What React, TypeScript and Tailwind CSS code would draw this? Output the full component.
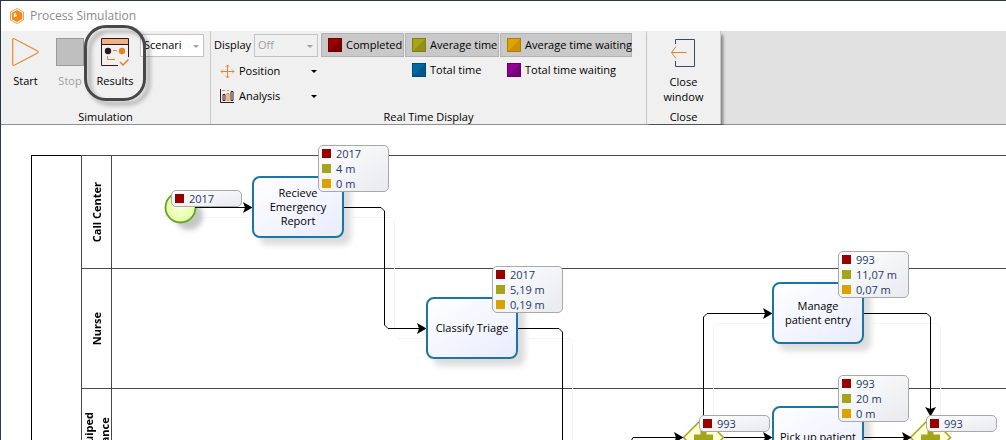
import type { ReactNode } from "react";
import { clsx } from "clsx";

type Metric = "completed" | "average" | "waiting";

interface Stat {
  metric: Metric;
  value: string;
}

interface Badge {
  left: number;
  top: number;
  stats: Stat[];
}

interface Task {
  left: number;
  top: number;
  name: string[];
}

const metricColors = {
  completed: "bg-[#990000]",
  average: "bg-[#a5a51b]",
  waiting: "bg-[#dba200]",
};

const done = (value: string): Stat => ({ metric: "completed", value });
const avg = (value: string): Stat => ({ metric: "average", value });
const wait = (value: string): Stat => ({ metric: "waiting", value });

const lanes = [
  { name: ["Call Center"], height: "h-[113px]" },
  { name: ["Nurse"], height: "h-[120px]" },
  { name: ["Fully Equiped", "Ambulance"], height: "h-[120px]" },
];

const tasks: Task[] = [
  { left: 251, top: 51, name: ["Recieve", "Emergency", "Report"] },
  { left: 425, top: 172, name: ["Classify Triage"] },
  { left: 771, top: 157, name: ["Manage", "patient entry"] },
  { left: 771, top: 281, name: ["Pick up patient"] },
];

const badges: Badge[] = [
  { left: 170, top: 65, stats: [done("2017")] },
  { left: 317, top: 20, stats: [done("2017"), avg("4 m"), wait("0 m")] },
  { left: 491, top: 141, stats: [done("2017"), avg("5,19 m"), wait("0,19 m")] },
  { left: 837, top: 126, stats: [done("993"), avg("11,07 m"), wait("0,07 m")] },
  { left: 837, top: 250, stats: [done("993"), avg("20 m"), wait("0 m")] },
  { left: 698, top: 290, stats: [done("993")] },
  { left: 925, top: 290, stats: [done("993")] },
];

const flows = [
  "M194 82.5H251",
  "M342 82.5H380L383.5 86V200L387 203.5H425",
  "M516 203.5H558L561.5 207V340",
  "M629 318L632 312.5H682",
  "M702.5 292V192L706 188.5H771",
  "M862 188.5H926L929.5 192V291",
  "M723 312.5H771",
  "M862 312.5H910",
];

function ToolButton({
  icon,
  label,
  disabled,
  className,
}: {
  icon: ReactNode;
  label: string;
  disabled?: boolean;
  className?: string;
}) {
  return (
    <button
      disabled={disabled}
      className={clsx(
        "flex flex-col items-center gap-[7px] pt-[7px] leading-[15px]",
        disabled && "text-[#a0a0a0]",
        className
      )}
    >
      {icon}
      <span>{label}</span>
    </button>
  );
}

function RibbonSelect({
  id,
  value,
  disabled,
}: {
  id: string;
  value: string;
  disabled?: boolean;
}) {
  return (
    <div className="relative">
      <select
        id={id}
        aria-label={value}
        disabled={disabled}
        className={clsx(
          "block h-[23px] w-16 appearance-none border border-[#c3c3c3] pl-[3px] opacity-100",
          disabled ? "bg-[#f0f0f0] text-[#a0a0a0]" : "bg-white text-black"
        )}
      >
        <option>{value}</option>
      </select>
      <svg
        className="pointer-events-none absolute top-[11px] right-[5px]"
        width="6"
        height="3"
        fill="#a0a0a0"
      >
        <path d="M0 0H6L3 3Z" />
      </svg>
    </div>
  );
}

function Swatch({ light, dark, edge }: { light: string; dark: string; edge: string }) {
  return (
    <svg width="14" height="14" className="shrink-0">
      <rect width="14" height="14" fill={light} />
      <path d="M14 0V14H0Z" fill={dark} />
      <rect x=".5" y=".5" width="13" height="13" fill="none" stroke={edge} />
    </svg>
  );
}

function Toggle({
  label,
  pressed,
  children,
}: {
  label: string;
  pressed?: boolean;
  children: ReactNode;
}) {
  return (
    <button
      aria-pressed={!!pressed}
      className={clsx(
        "flex h-6 items-center gap-1 border pl-1.5 whitespace-nowrap",
        pressed ? "border-[#b2b2b2] bg-[#c9c9c9]" : "border-transparent"
      )}
    >
      {children}
      {label}
    </button>
  );
}

function MenuButton({ icon, label }: { icon: ReactNode; label: string }) {
  return (
    <button className="flex h-[25px] w-[103px] items-center gap-1 pl-1.5">
      {icon}
      <span className="grow text-left">{label}</span>
      <svg width="6" height="3">
        <path d="M0 0H6L3 3Z" />
      </svg>
    </button>
  );
}

function Group({
  title,
  className,
  children,
}: {
  title: string;
  className?: string;
  children: ReactNode;
}) {
  return (
    <section
      className={clsx(
        "flex shrink-0 flex-col border-r border-[#c8c8c8] bg-[#f0f0f0]",
        className
      )}
    >
      <div className="flex h-[78px] items-start">{children}</div>
      <h2 className="text-center leading-[15px]">{title}</h2>
    </section>
  );
}

function Ribbon() {
  return (
    <div className="flex border-b border-[#8f8f8f] bg-[#e1e1e1] text-[11px]">
      <Group title="Simulation" className="w-[210px]">
        <ToolButton
          className="w-[49px]"
          label="Start"
          icon={
            <svg width="28" height="28" fill="none" stroke="#e88a33" strokeWidth="1.2">
              <path d="M.7 2Q.7 0 2.7 1L25.500 13Q27 14 25.500 15L2.700 27Q.7 28 .7 26Z" />
            </svg>
          }
        />
        <ToolButton
          className="w-10"
          label="Stop"
          disabled
          icon={<span className="size-7 border border-[#9a9a9a] bg-[#bfbfbf]" />}
        />
        <div className="relative">
          <ToolButton
            className="w-[50px]"
            label="Results"
            icon={
              <svg width="28" height="28" fill="none">
                <path d="M.5 .5H27.500V6.500H.5Z" fill="#f0b184" />
                <path d="M17 27.500H.5V.5H27.500V19M.5 6.500H27.500" stroke="#2f1620" />
                <circle cx="7" cy="13" r="3.200" fill="#2f1620" />
                <circle cx="21" cy="13" r="3.200" fill="#e8822a" />
                <path d="M12 12.500H16M6.500 18V21.500H14" stroke="#e8822a" />
                <path d="M19 24L22 27L27.500 21.500" stroke="#e8822a" strokeWidth="1.500" />
              </svg>
            }
          />
          <div className="pointer-events-none absolute -top-[6px] -left-[6px] z-10 h-[76px] w-[62px] rounded-[22px] border-[3px] border-[#484848] drop-shadow-[4px_4px_2px_rgba(0,0,0,0.35)]" />
        </div>
        <div className="pt-[3px]">
          <RibbonSelect id="scenario" value="Scenari" />
        </div>
      </Group>

      <Group title="Real Time Display" className="w-[436px]">
        <div className="w-[110px] pt-[3px] pl-[3px]">
          <div className="flex items-center justify-between pr-[3px] pb-0.5">
            <label htmlFor="display">Display</label>
            <RibbonSelect id="display" value="Off" disabled />
          </div>
          <MenuButton
            label="Position"
            icon={
              <svg width="15" height="15" fill="none" stroke="#e8822a">
                <path d="M7.500 1V14M1 7.500H14" />
                <path
                  d="M5.500 3L7.500 1L9.500 3M5.500 12L7.500 14L9.500 12M3 5.500L1 7.500L3 9.500M12 5.500L14 7.500L12 9.500"
                  strokeWidth=".8"
                />
              </svg>
            }
          />
          <MenuButton
            label="Analysis"
            icon={
              <svg width="15" height="15" fill="none" stroke="#2f1620">
                <path d="M.5 0V13.500H14M3 5.500H5V11.500H3ZM11 2.500H13V11.500H11Z" />
                <path d="M7 4.500H9V11.500H7Z" stroke="#e8822a" />
                <path d="M2 1.500H5M7 1.500H9" stroke="#a0949a" />
              </svg>
            }
          />
        </div>
        <div className="grid grid-cols-[83px_94px_132px] gap-x-px gap-y-px pt-0.5">
          <Toggle label="Completed" pressed>
            <Swatch light="#9c0000" dark="#7d0000" edge="#6b0000" />
          </Toggle>
          <Toggle label="Average time" pressed>
            <Swatch light="#a5a51b" dark="#919116" edge="#80800f" />
          </Toggle>
          <Toggle label="Average time waiting" pressed>
            <Swatch light="#dda500" dark="#cf9000" edge="#b07c00" />
          </Toggle>
          <span />
          <Toggle label="Total time">
            <Swatch light="#006ba0" dark="#005a8c" edge="#004a78" />
          </Toggle>
          <Toggle label="Total time waiting">
            <Swatch light="#910091" dark="#780078" edge="#650065" />
          </Toggle>
        </div>
      </Group>

      <Group title="Close" className="w-[74px] shadow-[2px_4px_3px_rgba(0,0,0,0.45)]">
        <button className="flex grow flex-col items-center gap-[7px] pt-2 leading-[15px]">
          <svg width="26" height="28" fill="none">
            <path d="M4.500 5V.5H23.500V27.500H4.500V22" stroke="#3a4a5e" />
            <path d="M15.500 13.500H.5M5 7.500L.5 13.500L5 19.500" stroke="#e8822a" />
          </svg>
          <span>
            Close
            <br />
            window
          </span>
        </button>
      </Group>
    </div>
  );
}

function StatBadge({ left, top, stats }: Badge) {
  return (
    <ul
      style={{ left, top }}
      className="absolute w-[71px] rounded-[5px] border border-[#a8a8a8] bg-gradient-to-br from-white to-[#e8eaee] pl-[3px] text-[#22396a]"
    >
      {stats.map((s) => (
        <li key={s.metric} className="flex h-[15px] items-center gap-[5px] leading-[15px]">
          <span className={clsx("size-[9px]", metricColors[s.metric])} />
          {s.value}
        </li>
      ))}
    </ul>
  );
}

function TaskBox({ left, top, name }: Task) {
  return (
    <div
      style={{ left, top }}
      className="absolute flex h-[62px] w-[92px] flex-col items-center justify-center rounded-lg border-2 border-[#1a76a6] bg-gradient-to-br from-white to-[#e9ecff] pb-px leading-[14px] shadow-[7px_7px_6px_rgba(0,0,0,0.14)]"
    >
      {name.map((line) => (
        <span key={line}>{line}</span>
      ))}
    </div>
  );
}

function Gateway({ x, y }: { x: number; y: number }) {
  return (
    <g transform={`translate(${x} ${y})`}>
      <path d="M0 -20L20 0L0 20L-20 0Z" fill="#ffffd8" stroke="#a5a51b" strokeWidth="1.500" />
      <path d="M-9.500 0H9.500M0 -9.500V9.500" stroke="#a5a51b" strokeWidth="6" />
    </g>
  );
}

function Diagram() {
  return (
    <main className="relative grow overflow-hidden bg-white pt-[30px] pl-[30px] text-[11px]">
      <div className="flex border-l border-black">
        <div className="w-[49px] shrink-0 border-t border-black" />
        <div className="grow border-t border-l border-[#484848]">
          {lanes.map((lane) => (
            <div
              key={lane.name[0]}
              className={clsx("flex border-b border-[#484848]", lane.height)}
            >
              <h3 className="flex w-[30px] shrink-0 items-center justify-center border-r border-[#484848]">
                <span className="rotate-180 text-center leading-4 font-bold whitespace-nowrap [writing-mode:vertical-rl]">
                  {lane.name.map((line) => (
                    <span key={line} className="block">
                      {line}
                    </span>
                  ))}
                </span>
              </h3>
            </div>
          ))}
        </div>
      </div>

      <svg className="absolute inset-0 size-full" fill="none">
        <defs>
          <marker
            id="arrow"
            markerUnits="userSpaceOnUse"
            markerWidth="10"
            markerHeight="12"
            refX="9"
            refY="6"
            orient="auto"
          >
            <path d="M0 0.500L9.500 6L0 11.500L2 6Z" fill="#000" />
          </marker>
          <radialGradient id="start">
            <stop offset="0" stopColor="#f6ffd8" />
            <stop offset="1" stopColor="#e6ffa8" />
          </radialGradient>
          <filter id="soft" x="-50%" y="-50%" width="200%" height="200%">
            <feGaussianBlur stdDeviation="2.500" />
          </filter>
        </defs>
        {flows.map((d) => (
          <path key={d} d={d} stroke="#f5f5f5" transform="translate(10 10)" />
        ))}
        <circle cx="188" cy="91" r="14" fill="#000" fillOpacity=".22" filter="url(#soft)" />
        <circle cx="179.500" cy="82.500" r="15" fill="url(#start)" stroke="#62a81c" strokeWidth="1.800" />
        <Gateway x={702.5} y={312.5} />
        <Gateway x={929.5} y={312.5} />
        {flows.map((d) => (
          <path key={d} d={d} stroke="#000" markerEnd="url(#arrow)" />
        ))}
      </svg>

      {tasks.map((t) => (
        <TaskBox key={t.name[0]} {...t} />
      ))}
      {badges.map((b) => (
        <StatBadge key={`${b.left}-${b.top}`} {...b} />
      ))}
    </main>
  );
}

export default function App() {
  return (
    <div className="flex h-screen flex-col overflow-hidden border-t border-l border-[#2b364a] bg-white font-['Open_Sans','Noto_Sans',sans-serif] text-black">
      <header className="flex h-[30px] shrink-0 items-center gap-[5px] pl-2">
        <svg width="16" height="16" viewBox="0 0 16 16">
          <path d="M8 .5L14.500 4V12L8 15.500L1.500 12V4Z" fill="#fff" stroke="#f0a050" />
          <path d="M8 2L13.200 4.800V11.200L8 14L2.800 11.200V4.800Z" fill="#f08a1c" />
          <path d="M8 2V8L4.800 9.500V5.500L6.500 4.500V7L8 6.500Z" fill="#fff" />
        </svg>
        <h1 className="text-xs text-[#8b8b8b]">Process Simulation</h1>
      </header>
      <Ribbon />
      <Diagram />
    </div>
  );
}
